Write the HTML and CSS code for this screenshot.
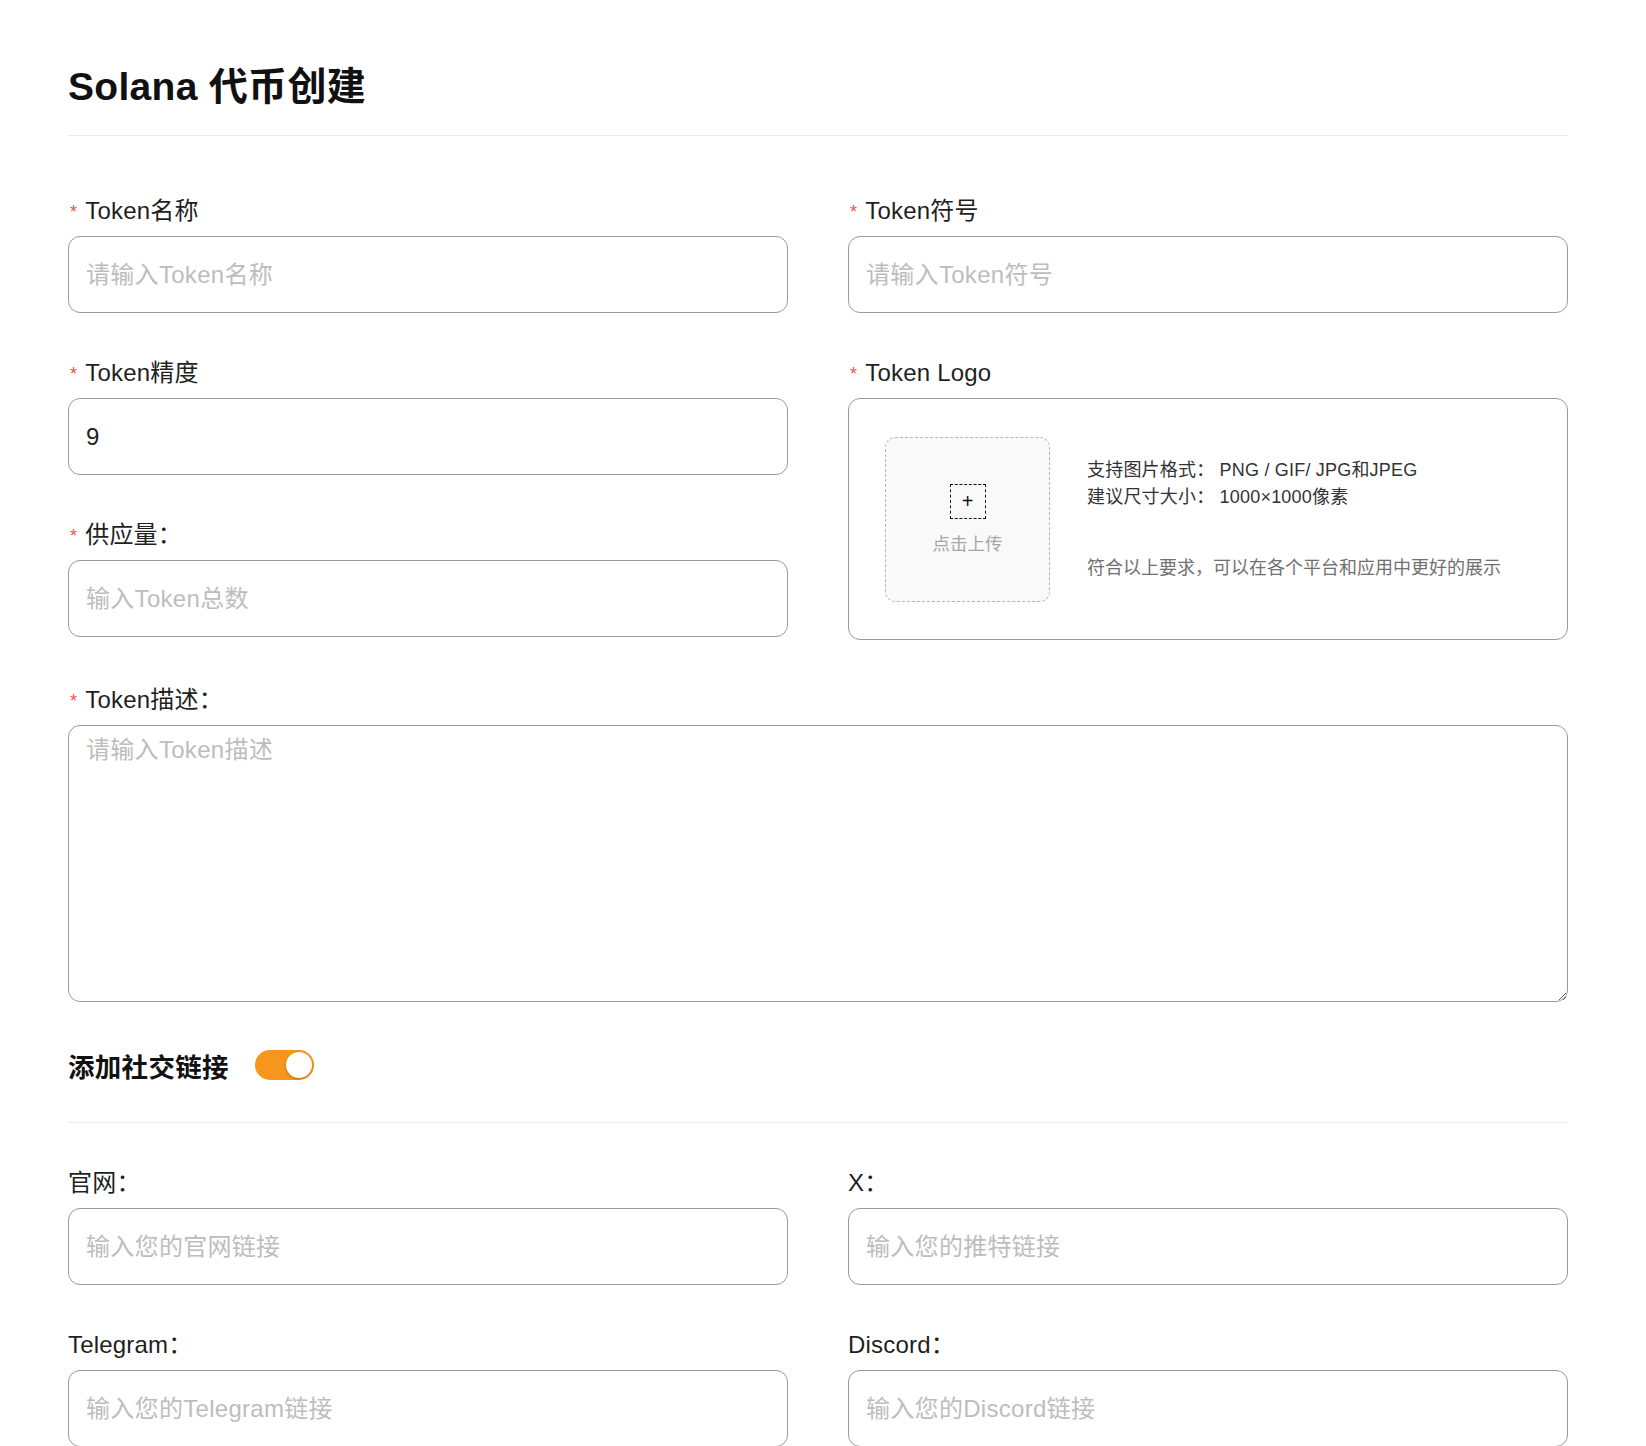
FILE: index.html
```html
<!DOCTYPE html>
<html lang="zh-CN">
<head>
<meta charset="utf-8">
<title>Solana 代币创建</title>
<link rel="stylesheet" href="styles.css">
</head>
<body>
<div class="page">
  <h1 class="title">Solana 代币创建</h1>
  <div class="divider top-divider"></div>

  <div class="grid main-grid">
    <div class="col">
      <div class="field">
        <label class="label"><span class="req">*</span>Token名称</label>
        <input class="input" type="text" placeholder="请输入Token名称">
      </div>
      <div class="field">
        <label class="label"><span class="req">*</span>Token精度</label>
        <input class="input" type="text" value="9">
      </div>
      <div class="field">
        <label class="label"><span class="req">*</span>供应量：</label>
        <input class="input" type="text" placeholder="输入Token总数">
      </div>
    </div>
    <div class="col">
      <div class="field">
        <label class="label"><span class="req">*</span>Token符号</label>
        <input class="input" type="text" placeholder="请输入Token符号">
      </div>
      <div class="field">
        <label class="label"><span class="req">*</span>Token Logo</label>
        <div class="logo-box">
          <div class="upload">
            <span class="plus">+</span>
            <span class="upload-text">点击上传</span>
          </div>
          <div class="logo-info">
            <div class="info-line">支持图片格式： PNG / GIF/ JPG和JPEG</div>
            <div class="info-line">建议尺寸大小： 1000×1000像素</div>
            <div class="info-line info-muted">符合以上要求，可以在各个平台和应用中更好的展示</div>
          </div>
        </div>
      </div>
    </div>
  </div>

  <div class="field">
    <label class="label"><span class="req">*</span>Token描述：</label>
    <textarea class="textarea" placeholder="请输入Token描述"></textarea>
  </div>

  <div class="social-row">
    <span class="social-title">添加社交链接</span>
    <span class="switch"><span class="knob"></span></span>
  </div>
  <div class="divider social-divider"></div>

  <div class="grid">
    <div class="field">
      <label class="label">官网：</label>
      <input class="input" type="text" placeholder="输入您的官网链接">
    </div>
    <div class="field">
      <label class="label">X：</label>
      <input class="input" type="text" placeholder="输入您的推特链接">
    </div>
    <div class="field">
      <label class="label">Telegram：</label>
      <input class="input" type="text" placeholder="输入您的Telegram链接">
    </div>
    <div class="field">
      <label class="label">Discord：</label>
      <input class="input" type="text" placeholder="输入您的Discord链接">
    </div>
  </div>
</div>
</body>
</html>
```

FILE: styles.css
```css
* { box-sizing: border-box; }

html, body {
  margin: 0;
  padding: 0;
  background: #fff;
}

body {
  font-family: "Liberation Sans", "Noto Sans CJK SC", sans-serif;
  color: #1f1f1f;
}

.page {
  width: 1500px;
  margin-left: 68px;
  padding-top: 62px;
}

.title {
  margin: 0;
  font-size: 39px;
  line-height: 50px;
  font-weight: 600;
  letter-spacing: 0.3px;
  color: #111;
}

.divider {
  height: 1px;
  background: #ececec;
}

.top-divider {
  margin-top: 23px;
  margin-bottom: 63px;
}

.grid {
  display: grid;
  grid-template-columns: 720px 720px;
  column-gap: 60px;
}

.col {
  display: flex;
  flex-direction: column;
}

.field {
  display: flex;
  flex-direction: column;
  margin-bottom: 48px;
}

.label {
  display: flex;
  align-items: center;
  font-size: 24px;
  line-height: 24px;
  height: 24px;
  margin-bottom: 13px;
  letter-spacing: 0.2px;
  color: #1f1f1f;
}

.req {
  color: #f0514f;
  font-size: 18px;
  margin-left: 2px;
  margin-right: 8px;
  position: relative;
  top: 1px;
}

.input {
  height: 77px;
  width: 100%;
  border: 1px solid #9a9a9a;
  border-radius: 12px;
  padding: 0 17px;
  font-family: "Liberation Sans", "Noto Sans CJK SC", sans-serif;
  font-size: 24px;
  letter-spacing: 0.3px;
  color: #1f1f1f;
  background: #fff;
  outline: none;
}

.input::placeholder,
.textarea::placeholder {
  color: #bdbdbd;
}

.logo-box {
  height: 242px;
  border: 1px solid #9a9a9a;
  border-radius: 12px;
  display: flex;
  align-items: center;
  padding-left: 36px;
}

.upload {
  width: 165px;
  height: 165px;
  border: 1px dashed #b5b5b5;
  border-radius: 10px;
  background: #f9f9f9;
  display: flex;
  flex-direction: column;
  align-items: center;
  justify-content: center;
}

.plus {
  width: 36px;
  height: 35px;
  border: 1px dashed #111;
  display: flex;
  align-items: center;
  justify-content: center;
  font-size: 20px;
  line-height: 1;
  color: #111;
}

.upload-text {
  margin-top: 11px;
  font-size: 17.5px;
  color: #a6a6a6;
}

.logo-info {
  margin-left: 37px;
  display: flex;
  flex-direction: column;
}

.info-line {
  font-size: 18px;
  line-height: 27px;
  letter-spacing: 0.2px;
  color: #333;
}

.info-muted {
  color: #707070;
  margin-top: 44px;
  letter-spacing: 0;
}

.textarea {
  height: 277px;
  width: 100%;
  border: 1px solid #9a9a9a;
  border-radius: 12px;
  padding: 8px 17px;
  font-family: "Liberation Sans", "Noto Sans CJK SC", sans-serif;
  font-size: 24px;
  letter-spacing: 0.3px;
  line-height: 32px;
  color: #1f1f1f;
  resize: vertical;
  outline: none;
}

.social-row {
  display: flex;
  align-items: center;
  height: 30px;
  margin-top: 2px;
}

.social-title {
  font-size: 26.5px;
  font-weight: 700;
  letter-spacing: 0.3px;
  color: #111;
}

.switch {
  margin-left: 26px;
  width: 59px;
  height: 30px;
  border-radius: 15px;
  background: #f7961c;
  display: flex;
  align-items: center;
  justify-content: flex-end;
  padding-right: 2px;
}

.knob {
  width: 26px;
  height: 26px;
  border-radius: 50%;
  background: #fff;
  box-shadow: 0 1px 3px rgba(0, 0, 0, 0.25);
}

.social-divider {
  margin-top: 42px;
  margin-bottom: 48px;
}
```
